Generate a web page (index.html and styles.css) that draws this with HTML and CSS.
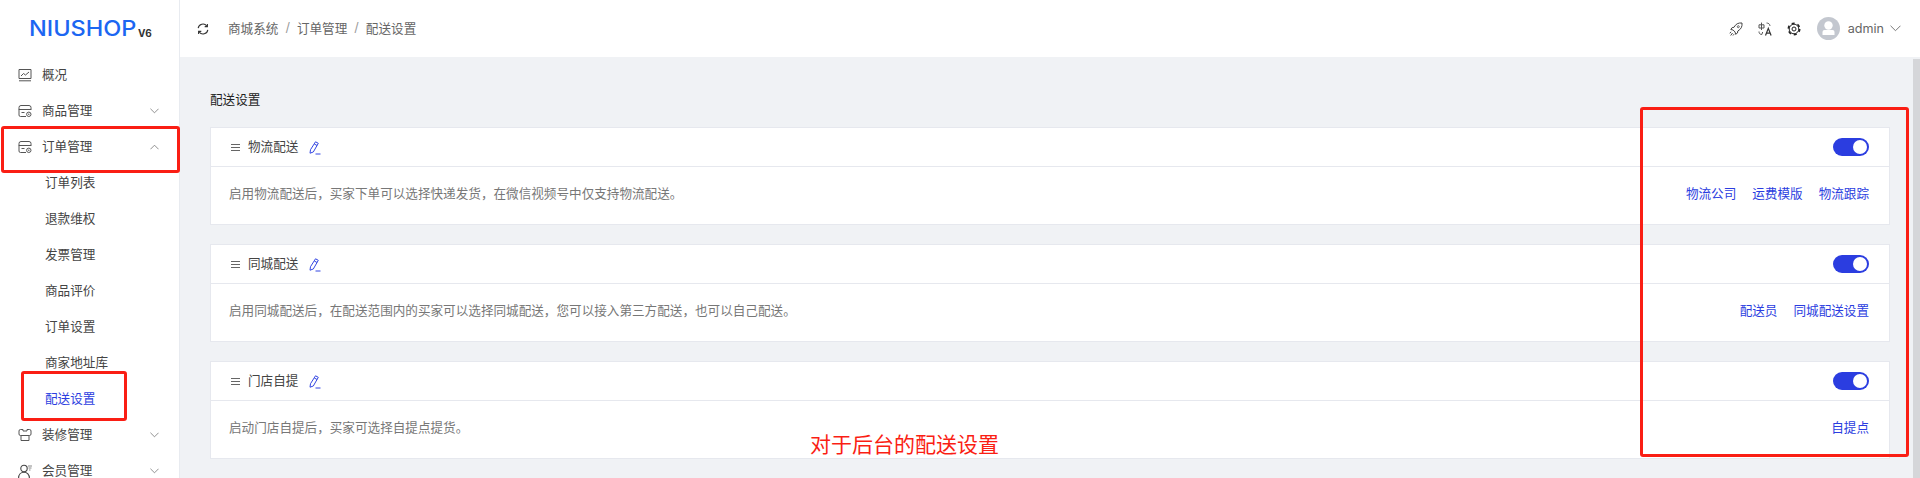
FILE: index.html
```html
<!DOCTYPE html>
<html lang="zh-CN">
<head>
  <meta charset="UTF-8" />
  <title>配送设置</title>
  <link rel="stylesheet" href="styles.css">
</head>
<body>
  <svg class="defs" width="0" height="0">
    <symbol id="i-store" viewBox="0 0 14 14">
      <path d="M3 1.500h8a2 2 0 0 1 2 2v2.500M1 6V3.500a2 2 0 0 1 2-2M1 5.500h12M1 5.500v5.500a1.500 1.500 0 0 0 1.500 1.500h5.500M3.500 8.500h3" fill="none" stroke="#555" stroke-width="1"/>
      <circle cx="10.800" cy="10.300" r="2.200" fill="none" stroke="#555" stroke-width="1"/>
      <circle cx="10.800" cy="10.300" r=".7" fill="#555"/>
    </symbol>
    <symbol id="i-down" viewBox="0 0 10 6">
      <path d="M.5 .5L5 5l4.500-4.500" fill="none" stroke="#777" stroke-width=".9"/>
    </symbol>
    <symbol id="i-edit" viewBox="0 0 13 14">
      <path d="M7.500 .8l2.800 1.500-5 8.700-3.300 1.200.5-3.500zM6.300 3l2.800 1.500" fill="none" stroke="#3346e2" stroke-width="1"/>
      <path d="M7.500 13h5" stroke="#3346e2" stroke-width="1"/>
    </symbol>
    <symbol id="i-menu" viewBox="0 0 9 7">
      <path d="M0 .5h9M0 3.500h9M0 6.500h9" stroke="#666" stroke-width="1"/>
    </symbol>
  </svg>

  <aside class="sidebar">
    <div class="logo"><span class="logo-name">NIUSHOP</span><span class="logo-ver">V6</span></div>
    <nav class="menu">
      <a class="menu-item">
        <svg class="menu-icon" viewBox="0 0 14 14"><path d="M1 1.500h12v9H1zM1 12.800h12M3 8l2.500-2.500 2 1.500 3.500-3" fill="none" stroke="#555" stroke-width="1"/></svg>
        <span>概况</span>
      </a>
      <a class="menu-item">
        <svg class="menu-icon"><use href="#i-store"/></svg>
        <span>商品管理</span>
        <svg class="arrow"><use href="#i-down"/></svg>
      </a>
      <a class="menu-item">
        <svg class="menu-icon"><use href="#i-store"/></svg>
        <span>订单管理</span>
        <svg class="arrow up"><use href="#i-down"/></svg>
      </a>
      <a class="menu-sub">订单列表</a>
      <a class="menu-sub">退款维权</a>
      <a class="menu-sub">发票管理</a>
      <a class="menu-sub">商品评价</a>
      <a class="menu-sub">订单设置</a>
      <a class="menu-sub">商家地址库</a>
      <a class="menu-sub active">配送设置</a>
      <a class="menu-item">
        <svg class="menu-icon" viewBox="0 0 14 14"><path d="M2.500 1.500h2.500v1.500h4V1.500h2.500a1.500 1.500 0 0 1 1.500 1.500v3a1.500 1.500 0 0 1-1.500 1.500H11v5H3v-5H2.500A1.500 1.500 0 0 1 1 6V3a1.500 1.500 0 0 1 1.500-1.500zM3 7.500h8" fill="none" stroke="#555" stroke-width="1"/></svg>
        <span>装修管理</span>
        <svg class="arrow"><use href="#i-down"/></svg>
      </a>
      <a class="menu-item">
        <svg class="menu-icon" viewBox="0 0 14 14"><circle cx="6" cy="4.500" r="3.200" fill="none" stroke="#444" stroke-width="1.100"/><path d="M.6 14c0-3.300 2.200-5.800 5.400-5.800s5.400 2.500 5.400 5.800" fill="none" stroke="#444" stroke-width="1.100"/><path d="M10 2h4M10.500 4h3M11 6h1.500" fill="none" stroke="#888" stroke-width="1"/></svg>
        <span>会员管理</span>
        <svg class="arrow"><use href="#i-down"/></svg>
      </a>
    </nav>
  </aside>

  <div class="main">
    <header class="topbar">
      <svg class="refresh" viewBox="0 0 12 12"><path d="M1.200 5.200A4.800 4.800 0 0 1 9.800 3M10.800 6.800A4.800 4.800 0 0 1 2.200 9" fill="none" stroke="#333" stroke-width="1.100"/><path d="M10.400 .9v2.700H7.700M1.600 11.100V8.400h2.700" fill="none" stroke="#333" stroke-width="1.100"/></svg>
      <div class="crumbs">
        <span>商城系统</span><i>/</i><span>订单管理</span><i>/</i><span>配送设置</span>
      </div>
      <div class="tools">
        <svg class="tool" viewBox="0 0 14 14"><path d="M13 1c-3.800-.4-6.300 1-8 4.300L3.200 5.600 1.800 7.500l2.300.5 2 2 .5 2.300L8.500 11l.3-2C12 7.200 13.400 4.800 13 1zM2 9.800l-1.200 1.500M3.500 11l-1.800 2.500M5 12.200l-1 1.300" fill="none" stroke="#444" stroke-width="1"/><circle cx="9.300" cy="4.700" r="1" fill="none" stroke="#444" stroke-width=".8"/></svg>
        <svg class="tool" viewBox="0 0 14 14"><path d="M1 2.800h5v3.200H1zM3.500 .6v7.400M1 9.500c0 1.800 1 3 2.800 3M4.700 10l-.9 2.500" fill="none" stroke="#555" stroke-width="1"/><path d="M7.500 13.500L10.300 6.300l2.800 7.200M8.600 11.200h3.400" fill="none" stroke="#333" stroke-width="1.200"/><path d="M8.500 1c2 0 3.500 1.200 3.500 3" fill="none" stroke="#666" stroke-width="1"/></svg>
        <svg class="tool gear" viewBox="0 0 14 14"><circle cx="7" cy="7" r="5.600" fill="none" stroke="#222" stroke-width="1.800" stroke-dasharray="2.900 2.960"/><circle cx="7" cy="7" r="4.800" fill="#fff" stroke="#222" stroke-width="1"/><circle cx="7" cy="7" r="2" fill="none" stroke="#222" stroke-width="1"/></svg>
        <div class="avatar">
          <svg viewBox="0 0 23 23"><circle cx="11.500" cy="11.500" r="11.500" fill="#c3c7cf"/><circle cx="11.500" cy="8.500" r="4.200" fill="#fff"/><path d="M5.500 15a2 2 0 0 1 2-2h8a2 2 0 0 1 2 2v3h-12z" fill="#fff"/></svg>
        </div>
        <span class="user">admin</span>
        <svg class="user-arrow"><use href="#i-down"/></svg>
      </div>
    </header>

    <main class="content">
      <h1 class="page-title">配送设置</h1>

      <section class="card">
        <div class="card-head">
          <svg class="drag"><use href="#i-menu"/></svg>
          <span class="card-name">物流配送</span>
          <svg class="edit"><use href="#i-edit"/></svg>
          <span class="switch"></span>
        </div>
        <div class="card-body">
          <p>启用物流配送后，买家下单可以选择快递发货，在微信视频号中仅支持物流配送。</p>
          <div class="links"><a>物流公司</a><a>运费模版</a><a>物流跟踪</a></div>
        </div>
      </section>

      <section class="card">
        <div class="card-head">
          <svg class="drag"><use href="#i-menu"/></svg>
          <span class="card-name">同城配送</span>
          <svg class="edit"><use href="#i-edit"/></svg>
          <span class="switch"></span>
        </div>
        <div class="card-body">
          <p>启用同城配送后，在配送范围内的买家可以选择同城配送，您可以接入第三方配送，也可以自己配送。</p>
          <div class="links"><a>配送员</a><a>同城配送设置</a></div>
        </div>
      </section>

      <section class="card">
        <div class="card-head">
          <svg class="drag"><use href="#i-menu"/></svg>
          <span class="card-name">门店自提</span>
          <svg class="edit"><use href="#i-edit"/></svg>
          <span class="switch"></span>
        </div>
        <div class="card-body">
          <p>启动门店自提后，买家可选择自提点提货。</p>
          <div class="links"><a>自提点</a></div>
        </div>
      </section>
    </main>
    <div class="scrollbar"></div>
  </div>

  <!-- annotations drawn over the screenshot -->
  <div class="mark mark-menu"></div>
  <div class="mark mark-sub"></div>
  <div class="mark mark-actions"></div>
  <div class="mark-text">对于后台的配送设置</div>
</body>
</html>
```

FILE: styles.css
```css
* {
  box-sizing: border-box;
}

html, body {
  height: 100%;
}

body {
  margin: 0;
  display: flex;
  height: 478px;
  overflow: hidden;
  position: relative;
  background: #fff;
  font-family: "Inter", "Noto Sans CJK SC", sans-serif;
  font-size: 12.6px;
  color: #444;
}

.defs {
  position: absolute;
}

.sidebar {
  width: 180px;
  flex: none;
  height: 478px;
  overflow: hidden;
  border-right: 1px solid #e8ebf0;
}

.logo {
  height: 57px;
  display: flex;
  align-items: flex-end;
  padding: 0 0 19px 29px;
  white-space: nowrap;
}

.logo-name {
  font-size: 21px;
  line-height: 18px;
  font-weight: 500;
  color: #1c66f2;
  transform: scaleX(1.12);
  transform-origin: left;
  margin-right: 13px;
}

.logo-ver {
  font-size: 10px;
  line-height: 10px;
  font-weight: 700;
  color: #333;
}

.menu {
  display: flex;
  flex-direction: column;
}

.menu-item, .menu-sub {
  height: 36px;
  flex: none;
  display: flex;
  align-items: center;
}

.menu-item {
  padding: 0 20px 0 18px;
}

.menu-item span {
  margin-bottom: 3px;
}

.menu-icon {
  width: 14px;
  height: 14px;
  margin-right: 10px;
  flex: none;
}

.arrow {
  width: 9px;
  height: 6px;
  margin-left: auto;
}

.arrow.up {
  transform: rotate(180deg);
}

.menu-sub {
  padding: 0 0 3px 45px;
}

.menu-sub.active {
  color: #2b3de0;
}

.main {
  flex: 1;
  min-width: 0;
  display: flex;
  flex-direction: column;
  position: relative;
}

.topbar {
  height: 57px;
  flex: none;
  display: flex;
  align-items: center;
  padding: 0 19px 0 17px;
  background: #fff;
}

.refresh {
  width: 12px;
  height: 12px;
  margin-right: 19px;
}

.crumbs {
  display: flex;
  color: #666;
  margin-bottom: 3px;
}

.crumbs i {
  font-style: normal;
  color: #999;
  margin: 2px 7px 0;
}

.tools {
  margin-left: auto;
  display: flex;
  align-items: center;
}

.tool {
  width: 14px;
  height: 14px;
  margin-right: 15px;
}

.avatar {
  width: 23px;
  height: 23px;
  margin-left: 1px;
  margin-right: 8px;
}

.avatar svg {
  display: block;
  width: 23px;
  height: 23px;
}

.user {
  font-size: 12.6px;
  color: #666;
}

.user-arrow {
  width: 11px;
  height: 7px;
  margin-left: 6px;
}

.content {
  flex: 1;
  min-height: 0;
  overflow: hidden;
  background: #f0f2f5;
  padding: 33px 30px 0 30px;
}

.page-title {
  margin: 0 0 18px;
  font-size: 12.6px;
  line-height: 19px;
  font-weight: 400;
  color: #222;
}

.card {
  height: 98px;
  margin-bottom: 19px;
  background: #fff;
  border: 1px solid #e6e8ee;
}

.card-head {
  height: 39px;
  display: flex;
  align-items: center;
  padding: 0 20px;
  border-bottom: 1px solid #e6e8ee;
}

.drag {
  width: 9px;
  height: 7px;
  margin-right: 8px;
}

.card-name {
  color: #444;
  margin-bottom: 3px;
}

.edit {
  width: 13px;
  height: 14px;
  margin-left: 10px;
  margin-top: 1px;
}

.switch {
  margin-left: auto;
  width: 36px;
  height: 18px;
  border-radius: 9px;
  background: #2b3de0;
  position: relative;
}

.switch::after {
  content: "";
  position: absolute;
  right: 2px;
  top: 2px;
  width: 14px;
  height: 14px;
  border-radius: 50%;
  background: #fff;
}

.card-body {
  display: flex;
  justify-content: space-between;
  padding: 17px 20px 0 18px;
  line-height: 19px;
}

.card-body p {
  margin: 0;
  color: #777;
}

.links {
  display: flex;
  gap: 16px;
  color: #2b3de0;
}

.scrollbar {
  position: absolute;
  right: 0;
  top: 59px;
  bottom: 0;
  width: 7px;
  background: #d5d6d9;
}

.mark {
  position: absolute;
  border: 3px solid #fa1e14;
  border-radius: 3px;
}

.mark-menu {
  left: 1px;
  top: 126px;
  width: 179px;
  height: 47px;
}

.mark-sub {
  left: 21px;
  top: 371px;
  width: 106px;
  height: 50px;
}

.mark-actions {
  left: 1640px;
  top: 107px;
  width: 269px;
  height: 350px;
}

.mark-text {
  position: absolute;
  left: 810px;
  top: 428px;
  font-size: 21px;
  line-height: 30px;
  color: #fa1e14;
  font-family: "Noto Sans CJK SC", sans-serif;
}
```
